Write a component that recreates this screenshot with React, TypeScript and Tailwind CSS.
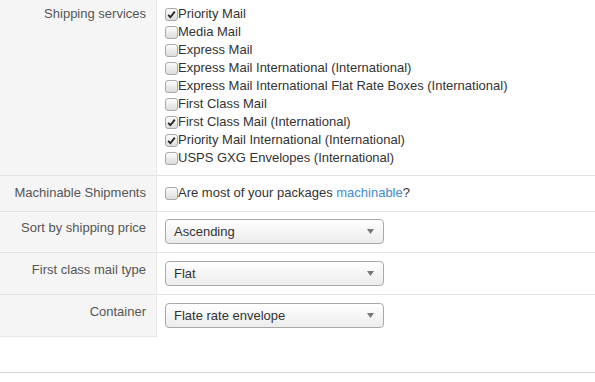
import React from 'react';

const services = [
  { name: 'Priority Mail', checked: true },
  { name: 'Media Mail', checked: false },
  { name: 'Express Mail', checked: false },
  { name: 'Express Mail International (International)', checked: false },
  { name: 'Express Mail International Flat Rate Boxes (International)', checked: false },
  { name: 'First Class Mail', checked: false },
  { name: 'First Class Mail (International)', checked: true },
  { name: 'Priority Mail International (International)', checked: true },
  { name: 'USPS GXG Envelopes (International)', checked: false },
];

const Checkbox: React.FC<{ checked?: boolean }> = ({ checked }) => (
  <span className="inline-flex w-[13px] h-[13px] shrink-0 items-center justify-center rounded-[3px] border border-[#a9a9a9] bg-gradient-to-b from-[#fcfcfc] to-[#dcdcdc]">
    {checked && (
      <svg width="9" height="9" viewBox="0 0 9 9">
        <path d="M1.2 4.8 L3.4 7.2 L7.8 1.6" fill="none" stroke="#222" strokeWidth={1.8} />
      </svg>
    )}
  </span>
);

const Select: React.FC<{ value: string }> = ({ value }) => (
  <div className="flex w-[219px] h-[25px] items-center justify-between rounded-[4px] border border-[#a9a9a9] bg-gradient-to-b from-white to-[#ececec] pl-[8px] pr-[9px] text-[13px] text-[#333]">
    <span>{value}</span>
    <svg width="7" height="5" viewBox="0 0 7 5">
      <path d="M0 0 L7 0 L3.5 5 Z" fill="#777" />
    </svg>
  </div>
);

const Row: React.FC<{ label: string; children: React.ReactNode; className?: string; last?: boolean }> = ({
  label,
  children,
  className = '',
  last,
}) => (
  <div className={`flex ${last ? '' : 'border-b border-[#e3e3e3]'}`}>
    <div
      className={`w-[157px] shrink-0 bg-[#f5f5f5] border-r border-[#e8e8e8] text-right pr-[10px] text-[#555] ${
        last ? 'border-b border-[#e8e8e8]' : ''
      } ${className}`}
    >
      {label}
    </div>
    <div className={`flex-1 pl-[8px] ${className}`}>{children}</div>
  </div>
);

export default function App() {
  return (
    <div className="w-[595px] h-[382px] bg-white text-[13px] leading-[18px] text-[#333]" style={{ fontFamily: '"Liberation Sans", Arial, sans-serif' }}>
      <Row label="Shipping services" className="pt-[5px] pb-[8px]">
        <div className="flex flex-col">
          {services.map((s) => (
            <label key={s.name} className="flex items-center h-[18px]">
              <Checkbox checked={s.checked} />
              <span>{s.name}</span>
            </label>
          ))}
        </div>
      </Row>
      <Row label="Machinable Shipments" className="pt-[8px] pb-[9px]">
        <label className="flex items-center h-[18px]">
          <Checkbox />
          <span>
            Are most of your packages <a className="text-[#428bca]">machinable</a>?
          </span>
        </label>
      </Row>
      <Row label="Sort by shipping price" className="pt-[7px] pb-[8px]">
        <Select value="Ascending" />
      </Row>
      <Row label="First class mail type" className="pt-[8px] pb-[8px]">
        <Select value="Flat" />
      </Row>
      <Row label="Container" className="pt-[8px] pb-[9px]" last>
        <Select value="Flate rate envelope" />
      </Row>
      <div className="h-[35px]" />
      <div className="border-t border-[#d5d5d5]" />
    </div>
  );
}
